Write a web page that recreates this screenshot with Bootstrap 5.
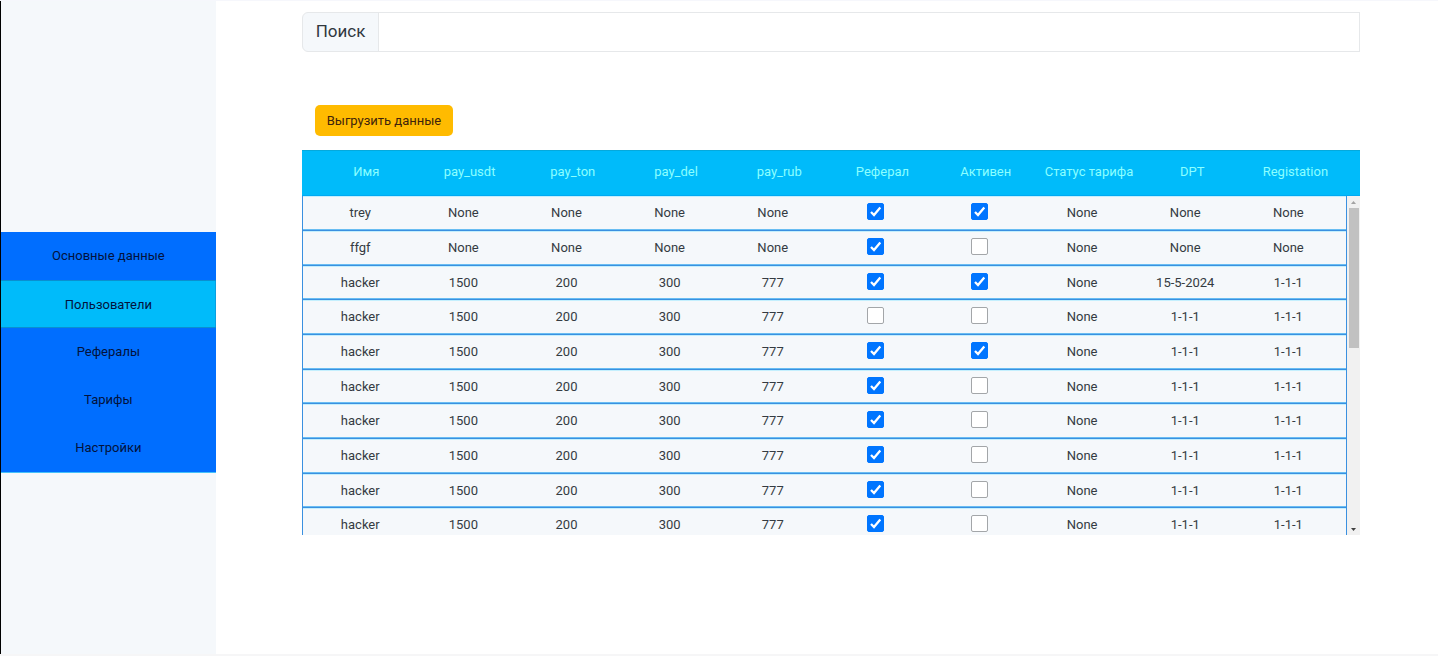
<!DOCTYPE html>
<html lang="ru">
<head>
<meta charset="utf-8">
<meta name="viewport" content="width=device-width, initial-scale=1">
<title>Пользователи</title>
<link href="https://cdn.jsdelivr.net/npm/bootstrap@5.3.0/dist/css/bootstrap.min.css" rel="stylesheet">
<style>
  body { font-family: Roboto, "Noto Sans", sans-serif; font-size: 13px; color: #343b42; background: #fff; }
  .page { border-top: 1px solid #f6f7fc; border-bottom: 2px solid #f6f6f7; }
  .side { width: 15%; background: #f5f8fb; padding-top: 231px; border-left: 1px solid #000; }
  .side .list-group { border-bottom: 1px solid #45c1fa; }
  .side .list-group-item { height: 48px; padding: 0; border-width: 0 0 1px; line-height: 47px; text-align: center; color: #03123c; background: #006eff; border-color: #006eff; }
  .side .list-group-item.active { margin-top: 0; background: #00bbfa; border-color: #0a8fd0; box-shadow: inset -1px 0 #0a9fe0; }
  .content { padding: 11px 78px 0 86px; }
  .search { height: 40px; }
  .search .input-group-text { font-size: 17px; padding: 0 13px; color: #30373e; background: #f5f8fb; border-color: #e6e8ea; }
  .search .form-control { border-color: #e6e8ea; border-radius: 0; }
  .export { margin: 53px 0 14px 13px; height: 31px; padding: 0 12px; font-size: 13px; color: #40230c; background: #ffbb00; border: 0; border-radius: 5px; }
  .export:hover { background: #f0b000; }
  .users { display: block; text-align: center; }
  .users thead, .users tbody { display: block; }
  .users tr { display: flex; align-items: center; }
  .users th, .users td { flex: 1 1 0; min-width: 0; line-height: 20px; white-space: nowrap; }
  .users thead tr { height: 46px; padding: 0 13px 2px; background: #00bbfa; border-top: 1px solid #05a9dc; border-bottom: 1px solid #00a9f3; }
  .users th { font-weight: 400; color: #8cffff; }
  .users tbody { height: 339px; overflow: hidden; margin-right: 13px; }
  .users tbody tr { height: 35px; padding: 0 6px; background: #f5f8fb; border: 1px solid #3a90e0; border-top: 0; box-shadow: inset 0 1px #c4effd, inset 0 -1px #69bdf2; }
  .users tbody tr:nth-child(3n) { height: 34px; }
  .users .form-check-input { display: block; width: 17px; height: 17px; margin: 0 auto 3px; border: 1px solid #a3a6a9; border-radius: 2px; }
  .users .form-check-input:checked { background-color: #0075ff; border-color: #0075ff; background-image: url("data:image/svg+xml,%3Csvg xmlns='http://www.w3.org/2000/svg' viewBox='0 0 15 15'%3E%3Cpath d='M3 8 6 11 12.300 3.500' fill='none' stroke='%23fff' stroke-width='2.300'/%3E%3C/svg%3E"); }
  .scroll { position: absolute; right: 0; bottom: 0; width: 13px; height: 339px; background: #f1f1f1; }
  .scroll svg { display: block; height: 12px; }
  .scroll .thumb { width: 10px; height: 140px; background: #c1c1c1; }
</style>
</head>
<body>
<div class="page d-flex min-vh-100">
  <aside class="side flex-shrink-0">
    <nav class="list-group list-group-flush rounded-0">
      <a href="#main" class="list-group-item">Основные данные</a>
      <a href="#users" class="list-group-item active" aria-current="page">Пользователи</a>
      <a href="#refs" class="list-group-item">Рефералы</a>
      <a href="#tariffs" class="list-group-item">Тарифы</a>
      <a href="#settings" class="list-group-item">Настройки</a>
    </nav>
  </aside>
  <main class="content flex-grow-1">
    <div class="search input-group">
      <label class="input-group-text" for="q">Поиск</label>
      <input type="text" class="form-control" id="q">
    </div>
    <button type="button" class="export btn d-block">Выгрузить данные</button>
    <div class="position-relative">
      <table class="users w-100">
        <thead>
          <tr><th>Имя</th><th>pay_usdt</th><th>pay_ton</th><th>pay_del</th><th>pay_rub</th><th>Реферал</th><th>Активен</th><th>Статус тарифа</th><th>DPT</th><th>Registation</th></tr>
        </thead>
        <tbody id="rows"></tbody>
      </table>
      <div class="scroll d-flex flex-column align-items-center" aria-hidden="true">
        <svg width="13" height="12"><path d="M4 8 6.500 5 9 8z" fill="#a3a3a3"/></svg>
        <div class="thumb mb-auto"></div>
        <svg width="13" height="12"><path d="M4 5 6.500 8 9 5z" fill="#404040"/></svg>
      </div>
    </div>
  </main>
</div>
<script src="https://cdn.jsdelivr.net/npm/bootstrap@5.3.0/dist/js/bootstrap.bundle.min.js"></script>
<script>
  const none = 'None';
  const hacker = (ref, active, dpt = '1-1-1') => ['hacker', 1500, 200, 300, 777, ref, active, none, dpt, '1-1-1'];
  const users = [
    ['trey', none, none, none, none, true, true, none, none, none],
    ['ffgf', none, none, none, none, true, false, none, none, none],
    hacker(true, true, '15-5-2024'),
    hacker(false, false),
    hacker(true, true)
  ];
  while (users.length < 10) users.push(hacker(true, false));
  const cell = (v, i) => typeof v === 'boolean'
    ? `<td><input type="checkbox" class="form-check-input" aria-label="${i === 5 ? 'Реферал' : 'Активен'}"${v ? ' checked' : ''}></td>`
    : `<td>${v}</td>`;
  document.getElementById('rows').innerHTML = users.map(u => `<tr>${u.map(cell).join('')}</tr>`).join('');
</script>
</body>
</html>
